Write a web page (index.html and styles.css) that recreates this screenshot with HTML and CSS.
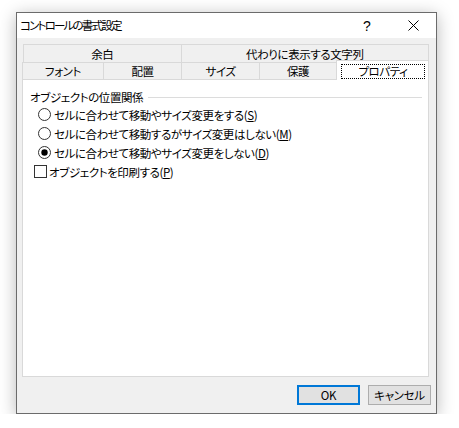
FILE: index.html
```html
<!DOCTYPE html>
<html lang="ja">
<head>
<meta charset="utf-8">
<title>コントロールの書式設定</title>
<link rel="stylesheet" href="styles.css">
</head>
<body>
<div class="window">
  <div class="titlebar">
    <span class="title">コントロールの書式設定</span>
    <span class="tb-btn help">?</span>
    <span class="tb-btn close">
      <svg width="11" height="11" viewBox="0 0 11 11"><path d="M0.5 0.5 L10.5 10.5 M10.5 0.5 L0.5 10.5" stroke="#000" stroke-width="1" fill="none"/></svg>
    </span>
  </div>
  <div class="body">
    <div class="tabs">
      <div class="row row1">
        <div class="tab t-margin">余白</div>
        <div class="tab t-alt">代わりに表示する文字列</div>
      </div>
      <div class="row row2">
        <div class="tab t-font">フォント</div>
        <div class="tab t-align">配置</div>
        <div class="tab t-size">サイズ</div>
        <div class="tab t-protect">保護</div>
        <div class="tab selected"><span class="focus">プロパティ</span></div>
      </div>
    </div>
    <div class="panel">
      <div class="legend"><span>オブジェクトの位置関係</span><span class="rule"></span></div>
      <div class="option radio">
        <svg width="13" height="13" viewBox="0 0 13 13"><circle cx="6.5" cy="6.5" r="6" fill="#fff" stroke="#333"/></svg>
        <span>セルに合わせて移動やサイズ変更をする(<u>S</u>)</span>
      </div>
      <div class="option radio">
        <svg width="13" height="13" viewBox="0 0 13 13"><circle cx="6.5" cy="6.5" r="6" fill="#fff" stroke="#333"/></svg>
        <span>セルに合わせて移動するがサイズ変更はしない(<u>M</u>)</span>
      </div>
      <div class="option radio">
        <svg width="13" height="13" viewBox="0 0 13 13"><circle cx="6.5" cy="6.5" r="6" fill="#fff" stroke="#333"/><circle cx="6.5" cy="6.5" r="3.2" fill="#000"/></svg>
        <span>セルに合わせて移動やサイズ変更をしない(<u>D</u>)</span>
      </div>
      <div class="option check">
        <span class="box"></span>
        <span>オブジェクトを印刷する(<u>P</u>)</span>
      </div>
    </div>
    <div class="buttons">
      <button class="btn default">OK</button>
      <button class="btn">キャンセル</button>
    </div>
  </div>
</div>
</body>
</html>
```
FILE: styles.css
```css
* { box-sizing: border-box; }
html, body { margin: 0; }
body {
  background: #fff;
  padding: 12px 0 0 16px;
  font-family: "Noto Sans CJK JP", "Noto Sans", sans-serif;
  font-size: 11.5px;
  letter-spacing: -0.4px;
  color: #000;
  font-feature-settings: "palt" 1;
  font-variant-east-asian: proportional-width;
}
.window {
  width: 421px;
  height: 402px;
  border: 1px solid #6b6b6b;
  background: #f0f0f0;
  box-shadow: 0 3px 16px rgba(0,0,0,0.28);
  display: flex;
  flex-direction: column;
}
.titlebar {
  height: 25px;
  background: #fff;
  display: flex;
  align-items: center;
  padding-left: 3px;
}
.title { flex: 1; line-height: 25px; letter-spacing: -1.8px; }
.tb-btn {
  width: 46px;
  height: 25px;
  display: flex;
  align-items: center;
  justify-content: center;
}
.help { font-family: "Liberation Sans", sans-serif; font-size: 14px; letter-spacing: 0; }
.close svg { display: block; }
.body {
  flex: 1;
  display: flex;
  flex-direction: column;
  padding: 6px 5px 8px 5px;
}
.tabs { width: 407px; }
.row { display: flex; }
.row1 { height: 18px; margin-left: 1px; }
.row2 { height: 17px; }
.tab {
  border-top: 1px solid #d9d9d9;
  border-right: 1px solid #d9d9d9;
  background: #f0f0f0;
  display: flex;
  align-items: center;
  justify-content: center;
  line-height: 16px;
  white-space: nowrap;
}
.t-margin { width: 159px; border-left: 1px solid #d9d9d9; }
.t-alt { width: 248px; }
.t-font { width: 82px; border-left: 1px solid #d9d9d9; }
.t-align { width: 78px; }
.t-size { width: 78px; }
.t-protect { width: 77px; }
.tab.selected {
  position: relative;
  z-index: 2;
  width: 93px;
  height: 20px;
  margin-top: -2px;
  margin-bottom: -1px;
  margin-left: -1px;
  background: #fff;
  border-left: 1px solid #d9d9d9;
  padding: 3px 3px 1px 4px;
  align-items: stretch;
}
.focus {
  flex: 1;
  border: 1px dotted #000;
  display: flex;
  align-items: center;
  justify-content: center;
  line-height: 13px;
}
.panel {
  width: 407px;
  height: 298px;
  border: 1px solid #d9d9d9;
  background: #fff;
  padding: 8px 6px 0 0;
}
.legend {
  height: 17px;
  display: flex;
  align-items: center;
  padding-left: 7px;
}
.rule {
  flex: 1;
  height: 1px;
  background: #dcdcdc;
  margin-left: 5px;
  margin-top: 1px;
}
.option {
  height: 19px;
  display: flex;
  align-items: center;
  white-space: nowrap;
}
.option svg { display: block; flex: none; }
.radio { padding-left: 15px; gap: 3px; }
.check { padding-left: 11px; gap: 2px; }
.box {
  width: 13px;
  height: 13px;
  border: 1px solid #333;
  background: #fff;
  flex: none;
}
u { text-underline-offset: 1px; }
.buttons {
  margin-top: 8px;
  display: flex;
  justify-content: flex-end;
  gap: 8px;
}
.btn {
  width: 63px;
  height: 20px;
  border: 1px solid #adadad;
  background: #e1e1e1;
  font-family: "Noto Sans CJK JP", "Noto Sans", sans-serif;
  font-size: 11.5px;
  letter-spacing: -0.3px;
  font-feature-settings: "palt" 1;
  font-variant-east-asian: proportional-width;
  color: #000;
  padding: 0;
  line-height: 16px;
}
.btn.default { border: 2px solid #0078d7; }
```
